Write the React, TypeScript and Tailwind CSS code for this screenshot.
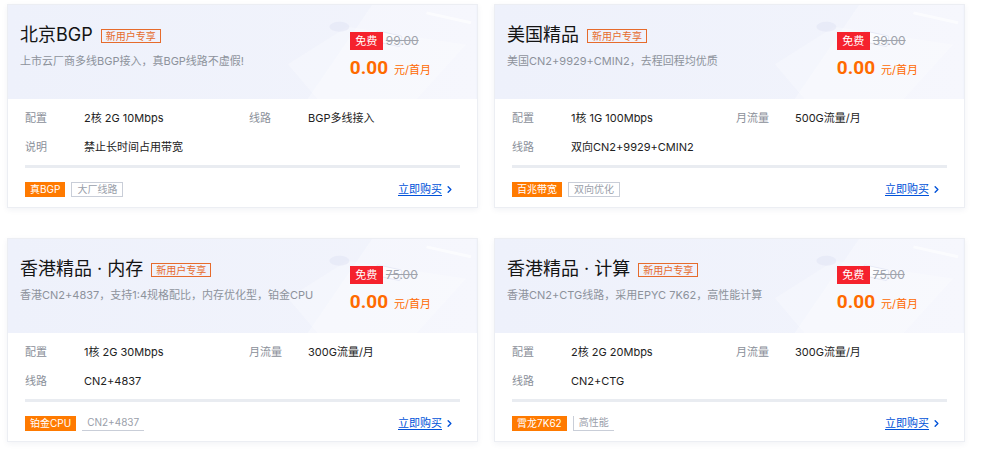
import { ChevronRight } from 'lucide-react'

interface Spec {
    label: string;
    value: string;
}

interface Plan {
    title: string;
    desc: string;
    origin: string;
    specs: Spec[];
    tags: string[];
    ghost: 'full' | 'bottom' | 'leftBottom';
}

const plans: Plan[] = [
    {
        title: '北京BGP',
        desc: '上市云厂商多线BGP接入，真BGP线路不虚假!',
        origin: '99.00',
        specs: [
            { label: '配置', value: '2核 2G 10Mbps' },
            { label: '线路', value: 'BGP多线接入' },
            { label: '说明', value: '禁止长时间占用带宽' },
        ],
        tags: ['真BGP', '大厂线路'],
        ghost: 'full',
    },
    {
        title: '美国精品',
        desc: '美国CN2+9929+CMIN2，去程回程均优质',
        origin: '39.00',
        specs: [
            { label: '配置', value: '1核 1G 100Mbps' },
            { label: '月流量', value: '500G流量/月' },
            { label: '线路', value: '双向CN2+9929+CMIN2' },
        ],
        tags: ['百兆带宽', '双向优化'],
        ghost: 'full',
    },
    {
        title: '香港精品 · 内存',
        desc: '香港CN2+4837，支持1:4规格配比，内存优化型，铂金CPU',
        origin: '75.00',
        specs: [
            { label: '配置', value: '1核 2G 30Mbps' },
            { label: '月流量', value: '300G流量/月' },
            { label: '线路', value: 'CN2+4837' },
        ],
        tags: ['铂金CPU', 'CN2+4837'],
        ghost: 'bottom',
    },
    {
        title: '香港精品 · 计算',
        desc: '香港CN2+CTG线路，采用EPYC 7K62，高性能计算',
        origin: '75.00',
        specs: [
            { label: '配置', value: '2核 2G 20Mbps' },
            { label: '月流量', value: '300G流量/月' },
            { label: '线路', value: 'CN2+CTG' },
        ],
        tags: ['霄龙7K62', '高性能'],
        ghost: 'leftBottom',
    },
]

// faint laptop-ish illustration in the header corner
const Decoration = () => (
    <svg className="absolute right-0 top-0 h-full w-[200px] pointer-events-none" viewBox="0 0 200 95" fill="none">
        <path d="M30 95 L95 0 L200 0 L200 95 Z" fill="#ffffff" fillOpacity="0.3" />
        <path d="M10 60 L70 22 L190 40 L140 95 L40 95 Z" fill="#ffffff" fillOpacity="0.25" />
        <ellipse cx="62" cy="22" rx="10" ry="5" fill="#e2e6f5" fillOpacity="0.6" />
        <rect x="100" y="26" width="26" height="11" rx="2" transform="rotate(12 100 26)" fill="#ffffff" fillOpacity="0.5" stroke="#e6e9f6" />
        <path d="M150 8 L195 18" stroke="#ffffff" strokeOpacity="0.6" strokeWidth="3" />
    </svg>
)

const PlanCard = ({ plan }: { plan: Plan }) => {
    const ghostBorder =
        plan.ghost === 'full' ? 'border border-[#c9ced8]' :
        plan.ghost === 'bottom' ? 'border-b border-[#c9ced8]' :
        'border-l border-b border-[#c9ced8]';

    return (
        <div className="h-[204px] bg-white border border-[#eceef3] shadow-[0_2px_6px_rgba(30,50,110,0.06)] flex flex-col">
            <div className="relative h-[94px] bg-gradient-to-r from-[#eef1fb] to-[#f2f4fc] flex overflow-hidden">
                <Decoration />
                <div className="relative flex flex-col pl-[12px] pt-[18px]">
                    <div className="flex items-center gap-[8px] h-[24px]">
                        <span className="text-[18px] leading-[24px] text-[#141414]">{plan.title}</span>
                        <span className="border border-[#e66b2c] text-[#e66b2c] text-[10px] leading-[12px] px-[4px] mt-[1px]">新用户专享</span>
                    </div>
                    <p className="mt-[6px] text-[11px] leading-[16px] text-[#8d929b]">{plan.desc}</p>
                </div>
                <div className="relative ml-auto mr-[46px] pt-[27px] flex flex-col whitespace-nowrap">
                    <div className="flex items-center gap-[3px]">
                        <span className="bg-[#f5222d] text-white text-[11px] leading-[18px] w-[33px] text-center">免费</span>
                        <span className="text-[12px] text-[#a0a4ad] line-through">{plan.origin}</span>
                    </div>
                    <div className="flex items-baseline gap-[6px] mt-[6px]">
                        <span className="font-['Roboto'] font-bold text-[19px] leading-[24px] text-[#ff6a00]">0.00</span>
                        <span className="text-[11px] text-[#ff6a00]">元/首月</span>
                    </div>
                </div>
            </div>
            <div className="flex flex-col px-[17px] pt-[10px] flex-1">
                <div className="grid grid-cols-[59px_165px_59px_1fr] gap-y-[11px] text-[11px] leading-[18px]">
                    {plan.specs.map((spec) => (
                        <div key={spec.label} className="contents">
                            <span className="text-[#8a8f99]">{spec.label}</span>
                            <span className="text-[#222]">{spec.value}</span>
                        </div>
                    ))}
                </div>
                <div className="h-[3px] bg-[#e9ecf1] mt-[9px]" />
                <div className="flex items-center justify-between mt-[13px]">
                    <div className="flex items-center gap-[6px]">
                        <span className="bg-[#ff7a00] text-white text-[10px] leading-[14px] px-[5px] h-[15px]">{plan.tags[0]}</span>
                        <span className={`${ghostBorder} text-[#9aa0aa] text-[10px] leading-[13px] px-[5px] h-[15px]`}>{plan.tags[1]}</span>
                    </div>
                    <a className="flex items-center text-[11px] text-[#0052d9] underline underline-offset-2 mr-[5px]">
                        立即购买
                        <ChevronRight className="w-[11px] h-[11px] ml-[2px]" strokeWidth={3} />
                    </a>
                </div>
            </div>
        </div>
    )
}

const App = () => {
    return (
        <div className="w-[1000px] h-[458px] bg-white pl-[7px] pt-[4px] font-['Inter','Noto_Sans_CJK_SC',sans-serif]">
            <div className="grid grid-cols-[471px_471px] gap-x-[16px] gap-y-[30px]">
                {plans.map((plan) => (
                    <PlanCard key={plan.title} plan={plan} />
                ))}
            </div>
        </div>
    )
}

export default App
